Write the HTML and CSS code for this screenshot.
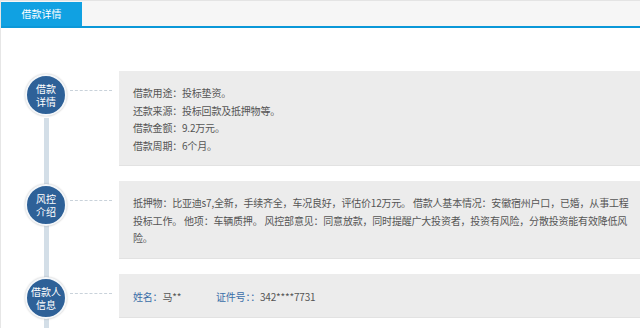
FILE: index.html
```html
<!DOCTYPE html>
<html lang="zh-CN">
<head>
    <meta charset="UTF-8">
    <title>借款详情</title>
    <link rel="stylesheet" href="styles.css">
</head>
<body>
    <div class="page">
        <!-- 标签栏 -->
        <div class="tab-bar">
            <a class="tab active" href="#">借款详情</a>
        </div>

        <!-- 详情时间线 -->
        <div class="timeline">
            <div class="row">
                <div class="row-head">
                    <span class="badge">借款<br>详情</span>
                    <span class="dash"></span>
                </div>
                <div class="row-body">
                    <p>借款用途：投标垫资。</p>
                    <p>还款来源：投标回款及抵押物等。</p>
                    <p>借款金额：9.2万元。</p>
                    <p>借款周期：6个月。</p>
                </div>
            </div>

            <div class="row">
                <div class="row-head">
                    <span class="badge">风控<br>介绍</span>
                    <span class="dash"></span>
                </div>
                <div class="row-body">
                    <p>抵押物：比亚迪s7,全新，手续齐全，车况良好，评估价12万元。&nbsp;借款人基本情况：安徽宿州户口，已婚，从事工程投标工作。&nbsp;他项：车辆质押。&nbsp;风控部意见：同意放款，同时提醒广大投资者，投资有风险，分散投资能有效降低风险。</p>
                </div>
            </div>

            <div class="row">
                <div class="row-head">
                    <span class="badge">借款人<br>信息</span>
                    <span class="dash"></span>
                </div>
                <div class="row-body info">
                    <span class="field"><em>姓名：</em>马**</span>
                    <span class="field"><em>证件号：：</em>342****7731</span>
                </div>
            </div>
        </div>
    </div>
</body>
</html>
```

FILE: styles.css
```css
* {
    margin: 0;
    padding: 0;
    box-sizing: border-box;
}

html, body {
    overflow: hidden;
}

body {
    font-family: "Noto Sans CJK SC", "Noto Sans", sans-serif;
    font-size: 10px;
    color: #555;
    background: #fff;
}

.page {
    width: 640px;
    border-left: 1px solid #e6e6e6;
}

/* 标签栏 */
.tab-bar {
    display: flex;
    height: 28px;
    padding: 1px 0 0 0;
    background: #f6f6f6;
    border-top: 1px solid #e4e4e4;
    border-bottom: 2px solid #0b98d8;
}

.tab {
    width: 81px;
    height: 24px;
    line-height: 24px;
    text-align: center;
    color: #fff;
    text-decoration: none;
    background: #10a1e2;
}

/* 时间线 */
.timeline {
    position: relative;
    padding: 43px 0 11px;
    display: flex;
    flex-direction: column;
    gap: 15px;
}

.timeline::before {
    content: "";
    position: absolute;
    left: 43px;
    top: 90px;
    bottom: 0;
    width: 5px;
    background: #d3dee7;
}

.row {
    display: flex;
    align-items: flex-start;
}

.row-head {
    position: relative;
    width: 118px;
    flex-shrink: 0;
    display: flex;
    align-items: flex-start;
    padding-top: 3px;
}

.badge {
    width: 42px;
    height: 42px;
    margin-left: 24px;
    border-radius: 50%;
    border: 2px solid #f4f7fa;
    box-shadow: 0 0 2px rgba(0, 0, 0, 0.25);
    background: #2e6198;
    color: #fff;
    font-size: 10px;
    line-height: 13px;
    text-align: center;
    display: flex;
    align-items: center;
    justify-content: center;
}

.dash {
    width: 42px;
    margin: 16px 0 0 3px;
    border-top: 1px dashed #c9d2da;
}

.row-body {
    flex: 1;
    background: #ececec;
    border-bottom: 1px solid #e2e2e2;
    padding: 13px 6px 11px 14px;
    line-height: 17.5px;
    letter-spacing: -0.2px;
}

.info {
    display: flex;
    padding-top: 14px;
    padding-bottom: 12px;
}

.field {
    width: 83px;
    white-space: nowrap;
}

.field em {
    font-style: normal;
    color: #3a6ea8;
}
```
